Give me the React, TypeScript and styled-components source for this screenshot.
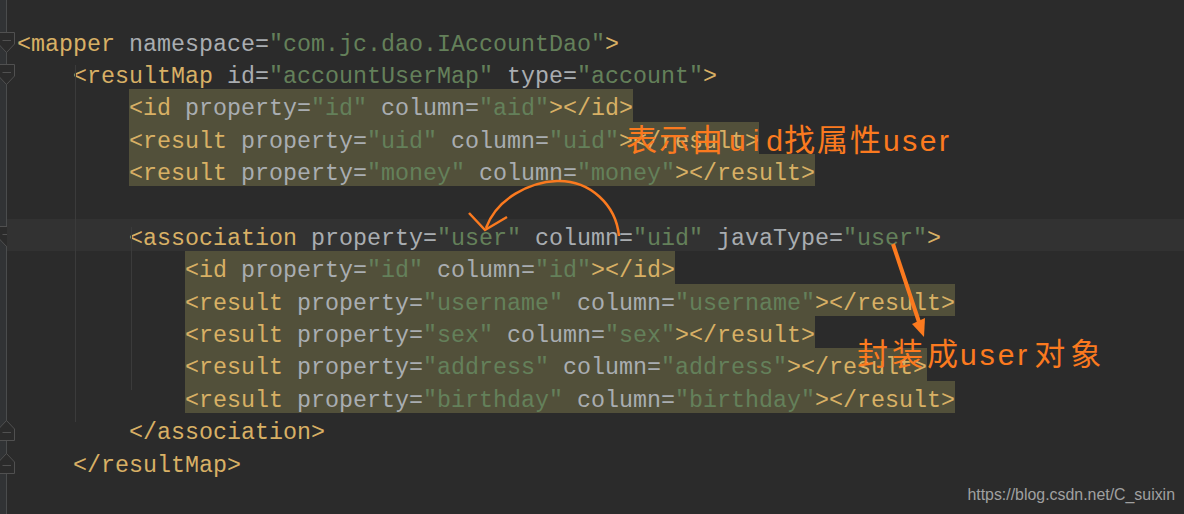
import React from "react";
import styled, { createGlobalStyle } from "styled-components";

const LINE = 32.4;
const TOP = 24.5;

const Global = createGlobalStyle`
  html, body { margin: 0; padding: 0; background: #2b2b2b; }
`;

const Editor = styled.div`
  position: relative;
  display: flex;
  width: 1184px;
  height: 514px;
  overflow: hidden;
  background: #2b2b2b;
`;

const Gutter = styled.div`
  flex: 0 0 6px;
  padding-top: ${TOP}px;
  background: #313335;
  border-right: 1px solid #4a4c4d;
`;

const GutterRow = styled.div`
  position: relative;
  height: ${LINE}px;
`;

const FoldIcon = styled.svg`
  position: absolute;
  left: -1px;
  top: 7px;
  overflow: visible;
`;

const Code = styled.div`
  position: relative;
  flex: 1;
  padding-top: ${TOP}px;
  font-family: "Liberation Mono", "Courier New", monospace;
  font-size: 23.33px;
  color: #a9adb1;
`;

const Row = styled.div<{ $current?: boolean; $indent: number }>`
  height: ${LINE}px;
  line-height: ${LINE + 8.6}px;
  padding-left: ${(p) => 10 + p.$indent * 14}px;
  white-space: pre;
  background: ${(p) => (p.$current ? "#323232" : "transparent")};
`;

const Mark = styled.span`
  display: inline-block;
  height: ${LINE}px;
  vertical-align: top;
  background: #52503a;
`;

const Plain = styled.span``;

const Tag = styled.span`
  color: #d8b065;
`;

const Str = styled.span`
  color: #64805a;
`;

const Guide = styled.div<{ $left: number; $top: number; $height: number }>`
  position: absolute;
  left: ${(p) => p.$left}px;
  top: ${(p) => p.$top}px;
  height: ${(p) => p.$height}px;
  width: 1px;
  background: #3b3b3b;
`;

const Overlay = styled.svg`
  position: absolute;
  left: 0;
  top: 0;
  pointer-events: none;
`;

const Note = styled.div<{ $left: number; $top: number }>`
  position: absolute;
  left: ${(p) => p.$left}px;
  top: ${(p) => p.$top}px;
  display: flex;
  align-items: baseline;
  line-height: 40px;
  white-space: pre;
  color: #fb7a1f;
`;

const NoteCjk = styled.span<{ $gap: number }>`
  font-family: "Noto Sans CJK SC", sans-serif;
  font-size: 31px;
  font-weight: 400;
  letter-spacing: ${(p) => p.$gap}px;
`;

const NoteLatin = styled.span<{ $gap: number; $before?: number; $after?: number }>`
  font-family: "Liberation Sans", Arial, sans-serif;
  font-size: 30px;
  letter-spacing: ${(p) => p.$gap}px;
  margin-left: ${(p) => p.$before ?? 0}px;
  margin-right: ${(p) => p.$after ?? 0}px;
`;

const Watermark = styled.div`
  position: absolute;
  right: 9px;
  bottom: 10px;
  font-family: "Liberation Sans", Arial, sans-serif;
  font-size: 15.9px;
  line-height: 18px;
  color: #a0a0a0;
`;

type LineDef = { indent: number; text: string; mark?: boolean; current?: boolean };

const lines: LineDef[] = [
  { indent: 0, text: '<mapper namespace="com.jc.dao.IAccountDao">' },
  { indent: 4, text: '<resultMap id="accountUserMap" type="account">' },
  { indent: 8, mark: true, text: '<id property="id" column="aid"></id>' },
  { indent: 8, mark: true, text: '<result property="uid" column="uid"></result>' },
  { indent: 8, mark: true, text: '<result property="money" column="money"></result>' },
  { indent: 0, text: "" },
  { indent: 8, current: true, text: '<association property="user" column="uid" javaType="user">' },
  { indent: 12, mark: true, text: '<id property="id" column="id"></id>' },
  { indent: 12, mark: true, text: '<result property="username" column="username"></result>' },
  { indent: 12, mark: true, text: '<result property="sex" column="sex"></result>' },
  { indent: 12, mark: true, text: '<result property="address" column="address"></result>' },
  { indent: 12, mark: true, text: '<result property="birthday" column="birthday"></result>' },
  { indent: 8, text: "</association>" },
  { indent: 4, text: "</resultMap>" },
];

const folds: Record<number, "open" | "close"> = { 0: "open", 1: "open", 6: "open", 12: "close", 13: "close" };

function Fold({ kind }: { kind: "open" | "close" }) {
  const outline = kind === "open" ? "M-0.5 0.5H15.5V12L7.5 20.5L-0.5 12Z" : "M-0.5 20.5H15.5V9L7.5 0.5L-0.5 9Z";
  const minusY = kind === "open" ? 8.5 : 12.5;
  return (
    <FoldIcon width="16" height="21" viewBox="0 0 16 21">
      <path d={outline} fill="#2b2b2b" stroke="#505050" />
      <path d={`M3.5 ${minusY}H12`} stroke="#505050" />
    </FoldIcon>
  );
}

function tokens(text: string) {
  const parts = text.match(/<\/?[\w]+|>|"[^"]*"|[\w]+|=|\s+/g) ?? [];
  return parts.map((part, i) => {
    if (part.startsWith("<") || part === ">") return <Tag key={i}>{part}</Tag>;
    if (part.startsWith('"')) return <Str key={i}>{part}</Str>;
    return <Plain key={i}>{part}</Plain>;
  });
}

export default function App() {
  return (
    <Editor>
      <Global />
      <Gutter>
        {lines.map((l, i) => (
          <GutterRow key={i}>{folds[i] && <Fold kind={folds[i]} />}</GutterRow>
        ))}
      </Gutter>
      <Code>
        {lines.map((l, i) => (
          <Row key={i} $indent={l.indent} $current={l.current}>
            {l.mark ? <Mark>{tokens(l.text)}</Mark> : tokens(l.text)}
          </Row>
        ))}
        <Guide $left={68} $top={65} $height={357} />
        <Guide $left={124} $top={227} $height={163} />
      </Code>
      <Overlay width="1184" height="514" viewBox="0 0 1184 514" fill="none">
        <path d="M619 236C616 205 590 180 557 181C530 182 497 198 486 228" stroke="#fb7a1f" strokeWidth="2.5" />
        <path d="M469 213L485 230L507 217" stroke="#fb7a1f" strokeWidth="2.5" />
        <path d="M893 244L921 328" stroke="#fb7a1f" strokeWidth="4" />
        <path d="M912 324L925 318L924 337Z" fill="#fb7a1f" />
      </Overlay>
      <Note $left={626} $top={118}>
        <NoteCjk $gap={2}>表示由</NoteCjk>
        <NoteLatin $gap={7} $before={4} $after={-6}>uid</NoteLatin>
        <NoteCjk $gap={2}>找属性</NoteCjk>
        <NoteLatin $gap={2.5}>user</NoteLatin>
      </Note>
      <Note $left={857} $top={332}>
        <NoteCjk $gap={4}>封装成</NoteCjk>
        <NoteLatin $gap={3} $before={-2} $after={4}>user</NoteLatin>
        <NoteCjk $gap={5}>对象</NoteCjk>
      </Note>
      <Watermark>https://blog.csdn.net/C_suixin</Watermark>
    </Editor>
  );
}
